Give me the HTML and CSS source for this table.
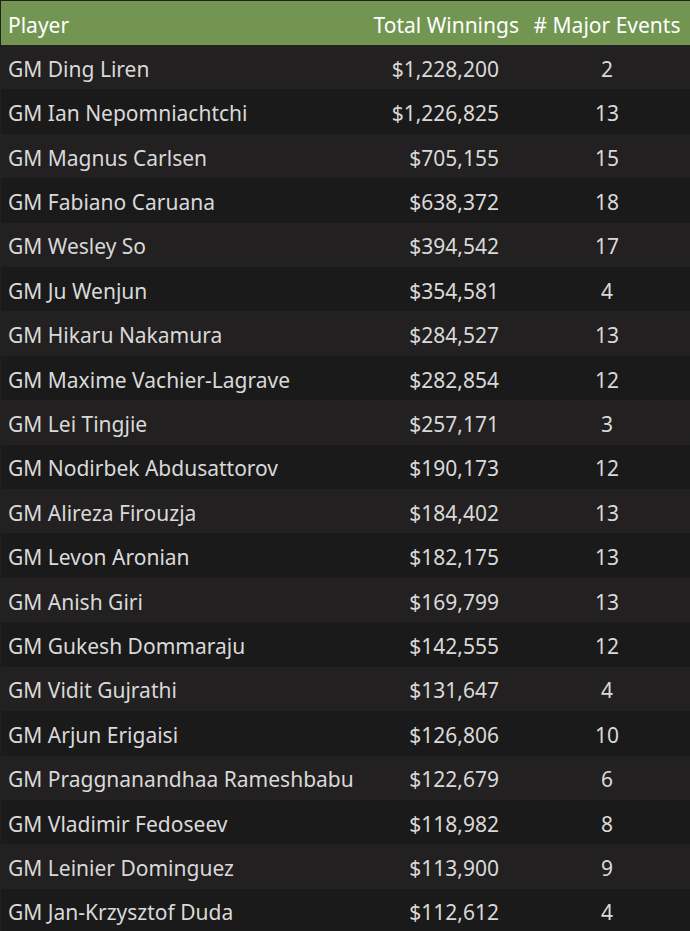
FILE: index.html
```html
<!DOCTYPE html>
<html>
<head>
<meta charset="utf-8">
<link rel="stylesheet" href="styles.css">
</head>
<body>
<div class="table">
  <div class="row head">
    <div class="c1">Player</div>
    <div class="c2">Total Winnings</div>
    <div class="c3"># Major Events</div>
  </div>
  <div class="row"><div class="c1">GM Ding Liren</div><div class="c2">$1,228,200</div><div class="c3">2</div></div>
  <div class="row"><div class="c1">GM Ian Nepomniachtchi</div><div class="c2">$1,226,825</div><div class="c3">13</div></div>
  <div class="row"><div class="c1">GM Magnus Carlsen</div><div class="c2">$705,155</div><div class="c3">15</div></div>
  <div class="row"><div class="c1">GM Fabiano Caruana</div><div class="c2">$638,372</div><div class="c3">18</div></div>
  <div class="row"><div class="c1">GM Wesley So</div><div class="c2">$394,542</div><div class="c3">17</div></div>
  <div class="row"><div class="c1">GM Ju Wenjun</div><div class="c2">$354,581</div><div class="c3">4</div></div>
  <div class="row"><div class="c1">GM Hikaru Nakamura</div><div class="c2">$284,527</div><div class="c3">13</div></div>
  <div class="row"><div class="c1">GM Maxime Vachier-Lagrave</div><div class="c2">$282,854</div><div class="c3">12</div></div>
  <div class="row"><div class="c1">GM Lei Tingjie</div><div class="c2">$257,171</div><div class="c3">3</div></div>
  <div class="row"><div class="c1">GM Nodirbek Abdusattorov</div><div class="c2">$190,173</div><div class="c3">12</div></div>
  <div class="row"><div class="c1">GM Alireza Firouzja</div><div class="c2">$184,402</div><div class="c3">13</div></div>
  <div class="row"><div class="c1">GM Levon Aronian</div><div class="c2">$182,175</div><div class="c3">13</div></div>
  <div class="row"><div class="c1">GM Anish Giri</div><div class="c2">$169,799</div><div class="c3">13</div></div>
  <div class="row"><div class="c1">GM Gukesh Dommaraju</div><div class="c2">$142,555</div><div class="c3">12</div></div>
  <div class="row"><div class="c1">GM Vidit Gujrathi</div><div class="c2">$131,647</div><div class="c3">4</div></div>
  <div class="row"><div class="c1">GM Arjun Erigaisi</div><div class="c2">$126,806</div><div class="c3">10</div></div>
  <div class="row"><div class="c1">GM Praggnanandhaa Rameshbabu</div><div class="c2">$122,679</div><div class="c3">6</div></div>
  <div class="row"><div class="c1">GM Vladimir Fedoseev</div><div class="c2">$118,982</div><div class="c3">8</div></div>
  <div class="row"><div class="c1">GM Leinier Dominguez</div><div class="c2">$113,900</div><div class="c3">9</div></div>
  <div class="row"><div class="c1">GM Jan-Krzysztof Duda</div><div class="c2">$112,612</div><div class="c3">4</div></div>
</div>
</body>
</html>
```

FILE: styles.css
```css
html, body {
  margin: 0;
  padding: 0;
  background: #1b1a1a;
}
body {
  font-family: "Noto Sans", "Open Sans", sans-serif;
  font-size: 21px;
  color: #d9d9d9;
  overflow: hidden;
}
.table {
  border-top: 1px solid #202020;
  border-left: 1px solid #202020;
  width: 689px;
}
.row {
  display: grid;
  grid-template-columns: 1fr 156px 163px;
  height: 44.42px;
  box-sizing: border-box;
  padding-top: 3px;
  align-items: center;
  background: #1b1a1a;
}
.row:nth-child(even) {
  background: #222020;
}
.row.head {
  height: 44px;
  padding-top: 3px;
  background: #729652;
  color: #ffffff;
}
.c1 {
  padding-left: 7px;
  white-space: nowrap;
}
.c2 {
  text-align: right;
  padding-right: 28px;
  white-space: nowrap;
}
.head .c2 {
  padding-right: 8px;
}
.c3 {
  text-align: center;
  padding-right: 3px;
  white-space: nowrap;
}
```
